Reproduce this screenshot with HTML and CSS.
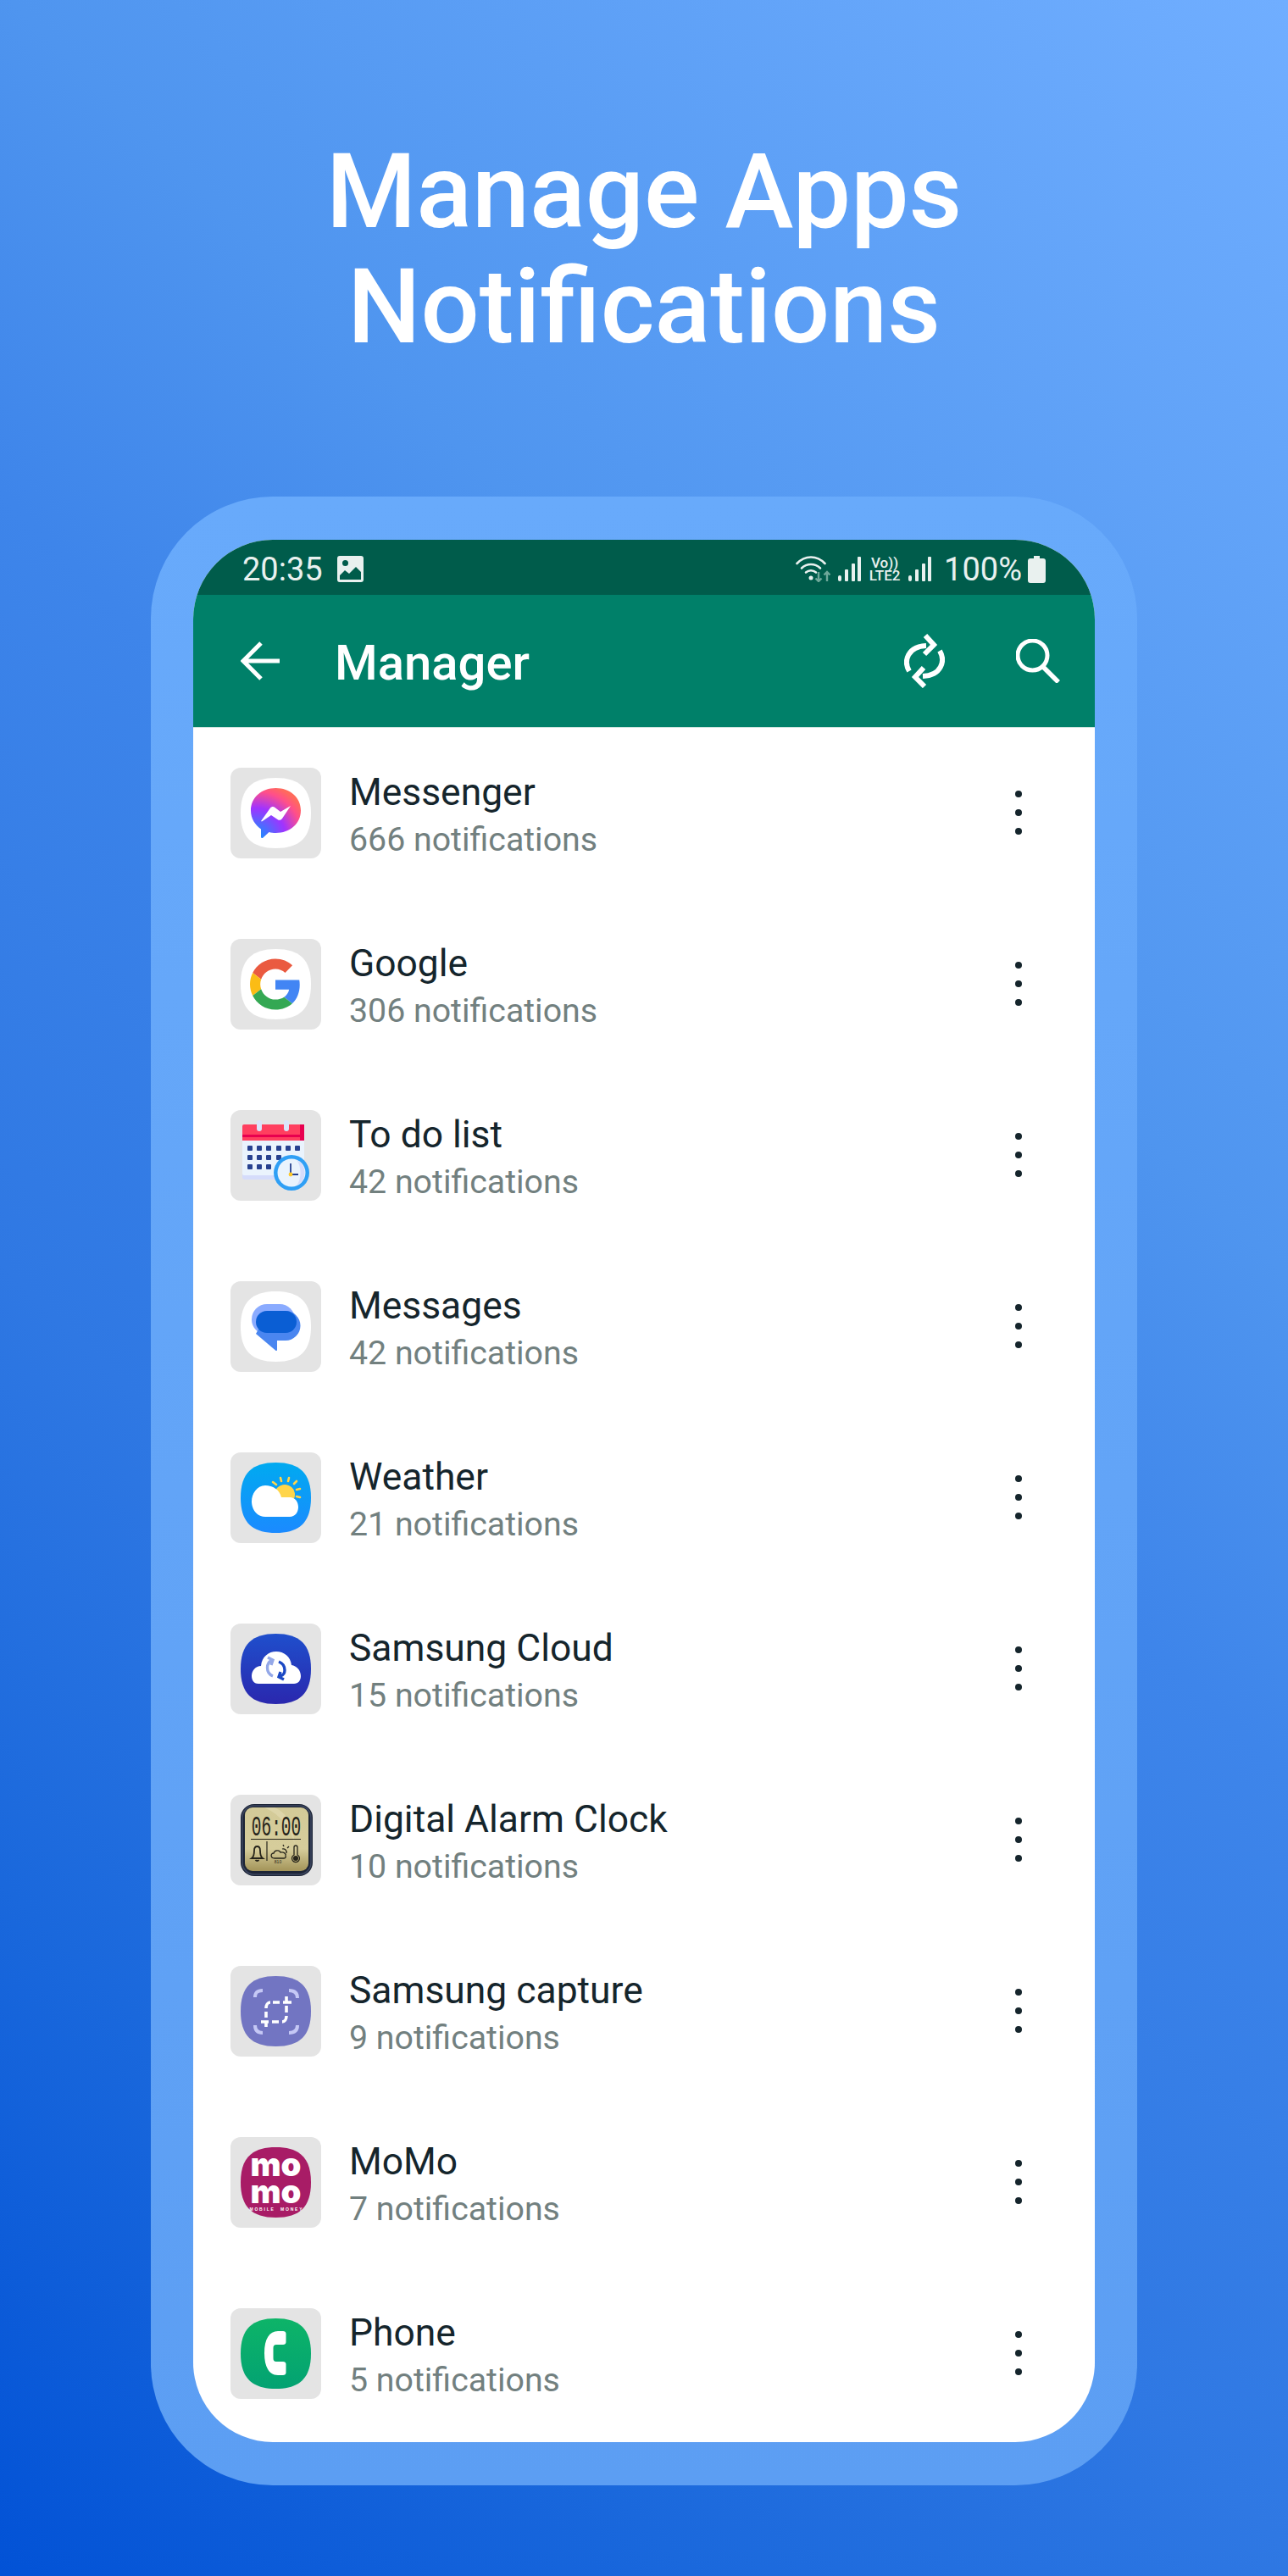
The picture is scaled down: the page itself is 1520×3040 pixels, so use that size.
FILE: index.html
```html
<!DOCTYPE html>
<html lang="en">
<head>
    <meta charset="UTF-8">
    <meta name="viewport" content="width=device-width, initial-scale=1.0">
    <title>Manage Apps Notifications</title>
    <link rel="stylesheet" href="styles.css">
</head>
<body>
    <svg class="defs" width="0" height="0">
        <defs>
            <path id="squircle" d="M53.5 12C82 12 95 25 95 53.5S82 95 53.5 95 12 82 12 53.5 25 12 53.5 12Z"/>
            <g id="kebab">
                <circle cx="6" cy="6" r="4"/>
                <circle cx="6" cy="28" r="4"/>
                <circle cx="6" cy="50" r="4"/>
            </g>
            <g id="signal">
                <rect x="0" y="22" width="4" height="7" rx="2"/>
                <rect x="8" y="15" width="4" height="14" rx="1"/>
                <rect x="16" y="8" width="4" height="21" rx="1"/>
                <rect x="23" y="0" width="4" height="29" rx="1"/>
            </g>
            <radialGradient id="msgr" cx="0.1" cy="1" r="1.1">
                <stop offset="0" stop-color="#0a99ff"/>
                <stop offset="0.55" stop-color="#a033ff"/>
                <stop offset="0.85" stop-color="#ff4f8a"/>
                <stop offset="1" stop-color="#ff6a5c"/>
            </radialGradient>
            <linearGradient id="weatherBg" x1="0" y1="0" x2="0" y2="1">
                <stop offset="0" stop-color="#00aaf0"/>
                <stop offset="1" stop-color="#1b8aff"/>
            </linearGradient>
            <linearGradient id="cloudBg" x1="0" y1="0" x2="0" y2="1">
                <stop offset="0" stop-color="#1f4fcc"/>
                <stop offset="1" stop-color="#2a27ae"/>
            </linearGradient>
            <linearGradient id="phoneBg" x1="0" y1="0" x2="0" y2="1">
                <stop offset="0" stop-color="#0db468"/>
                <stop offset="1" stop-color="#03a272"/>
            </linearGradient>
            <linearGradient id="lcd" x1="0" y1="0" x2="0" y2="1">
                <stop offset="0" stop-color="#d3ca98"/>
                <stop offset="0.65" stop-color="#d6cd9b"/>
                <stop offset="1" stop-color="#a39459"/>
            </linearGradient>
        </defs>
    </svg>

    <h1 class="headline">Manage Apps<br>Notifications</h1>

    <div class="frame">
        <div class="screen">
            <div class="statusbar">
                <span class="clock">20:35</span>
                <svg class="st-image" viewBox="0 0 31 31">
                    <path fill="#e9f1ef" fill-rule="evenodd" d="M3 0H28A3 3 0 0 1 31 3V28A3 3 0 0 1 28 31H3A3 3 0 0 1 0 28V3A3 3 0 0 1 3 0ZM9.500 5A3.500 3.500 0 1 0 9.500 12 3.500 3.500 0 0 0 9.500 5ZM3 26V28H28V19L22 13 14 21 9 17 3 23Z"/>
                </svg>
                <span class="status-right">
                    <svg class="st-wifi" viewBox="0 0 42 31">
                        <g fill="none" stroke="#e9f1ef" stroke-width="2.600" stroke-linecap="round">
                            <path d="M1.500 9C11 -1 25 -1 34.500 9"/>
                            <path d="M7 14.500C13 8.500 23 8.500 29 14.500"/>
                            <path d="M12 19.500C15.500 16.500 20.500 16.500 24 19.500"/>
                        </g>
                        <circle cx="18" cy="26" r="2.500" fill="#e9f1ef"/>
                        <g fill="none" stroke="#6fa89a" stroke-width="2.400">
                            <path d="M27 19V30M23.500 26.500 27 30 30.500 26.500"/>
                            <path d="M37 30V19M33.500 22.500 37 19 40.500 22.500"/>
                        </g>
                    </svg>
                    <svg class="st-signal" viewBox="0 0 27 29"><use href="#signal" fill="#e9f1ef"/></svg>
                    <span class="volte"><span>Vo))</span><span>LTE2</span></span>
                    <svg class="st-signal" viewBox="0 0 27 29"><use href="#signal" fill="#e9f1ef"/></svg>
                    <span class="battery-text">100%</span>
                    <svg class="st-battery" viewBox="0 0 21 32">
                        <path fill="#e9f1ef" d="M7 0H14V3H18A3 3 0 0 1 21 6V29A3 3 0 0 1 18 32H3A3 3 0 0 1 0 29V6A3 3 0 0 1 3 3H7Z"/>
                    </svg>
                </span>
            </div>

            <div class="toolbar">
                <svg class="tb-back" viewBox="0 0 46 46">
                    <path fill="none" stroke="#fff" stroke-width="5" d="M46 23H3M24 2 3 23 24 44"/>
                </svg>
                <span class="tb-title">Manager</span>
                <svg class="tb-sync" viewBox="0 0 48 64">
                    <g fill="none" stroke="#fff" stroke-width="6">
                        <path d="M6 44C-1 32 4 15 26 14"/>
                        <path d="M25 2 35 13 24 24"/>
                        <path d="M42 20C49 32 44 49 22 50"/>
                        <path d="M23 40 13 51 24 62"/>
                    </g>
                </svg>
                <svg class="tb-search" viewBox="0 0 52 52">
                    <circle cx="19.500" cy="19.500" r="17.500" fill="none" stroke="#fff" stroke-width="5"/>
                    <path fill="none" stroke="#fff" stroke-width="5.500" d="M31 32 50 51"/>
                </svg>
            </div>

            <ul class="app-list">
                <li class="app-row">
                    <svg class="app-icon" viewBox="0 0 107 107">
                        <use href="#squircle" fill="#fff"/>
                        <path fill="url(#msgr)" d="M53.500 24C70 24 83 35 83 50.500S70 77 53.500 77C50.500 77 48 76.600 45.500 76L38.500 82.500C37.300 83.500 36 83 36 81.500V72.500C29 67.500 24 60 24 50.500 24 35 37 24 53.500 24Z"/>
                        <path fill="#fff" d="M36 63 47 47.500C48.500 45.500 51 45.500 52.500 47L59 52 71 45 61 60C59.500 62 57 62.500 55.500 61L48 56 37 63.500Z"/>
                    </svg>
                    <div class="app-text">
                        <span class="app-name">Messenger</span>
                        <span class="app-count">666 notifications</span>
                    </div>
                    <svg class="app-more" viewBox="0 0 12 56"><use href="#kebab"/></svg>
                </li>
                <li class="app-row">
                    <svg class="app-icon" viewBox="0 0 107 107">
                        <use href="#squircle" fill="#fff"/>
                        <g transform="translate(23 23.500) scale(1.250)">
                            <path fill="#ea5a40" d="M24 9.500c3.540 0 6.710 1.220 9.210 3.600l6.850-6.850C35.900 2.380 30.470 0 24 0 14.620 0 6.510 5.380 2.560 13.220l7.980 6.190C12.430 13.720 17.740 9.500 24 9.500z"/>
                            <path fill="#4285f4" d="M46.980 24.550c0-1.570-.15-3.090-.38-4.550H24v9.020h12.940c-.58 2.960-2.260 5.480-4.780 7.180l7.730 6c4.510-4.180 7.090-10.360 7.090-17.650z"/>
                            <path fill="#fbbc15" d="M10.530 28.590c-.5-1.450-.78-2.990-.78-4.590s.27-3.140.78-4.590l-7.980-6.190C.92 16.460 0 20.120 0 24c0 3.880.92 7.540 2.560 10.780l7.970-6.190z"/>
                            <path fill="#34a853" d="M24 48c6.480 0 11.930-2.130 15.890-5.810l-7.730-6c-2.150 1.450-4.920 2.300-8.160 2.300-6.260 0-11.570-4.220-13.470-9.910l-7.980 6.190C6.510 42.620 14.620 48 24 48z"/>
                        </g>
                    </svg>
                    <div class="app-text">
                        <span class="app-name">Google</span>
                        <span class="app-count">306 notifications</span>
                    </div>
                    <svg class="app-more" viewBox="0 0 12 56"><use href="#kebab"/></svg>
                </li>
                <li class="app-row">
                    <svg class="app-icon" viewBox="0 0 107 107">
                        <rect x="14" y="22" width="73" height="60" rx="3" fill="#d5dcfb"/>
                        <rect x="14" y="22" width="73" height="55" rx="2" fill="#eaf3fd"/>
                        <path fill="#ff3f5f" d="M16 17H85A2 2 0 0 1 87 19V36H14V19A2 2 0 0 1 16 17Z"/>
                        <rect x="14" y="29" width="73" height="3" fill="#e8004f"/>
                        <rect x="82" y="17" width="5" height="19" fill="#e8004f"/>
                        <rect x="31" y="12" width="6" height="13" rx="3" fill="#dbe4fb"/>
                        <rect x="63" y="12" width="6" height="13" rx="3" fill="#dbe4fb"/>
                        <g fill="#27418f">
                            <rect x="20" y="42" width="6" height="6" rx="1"/><rect x="31" y="42" width="6" height="6" rx="1"/><rect x="42" y="42" width="6" height="6" rx="1"/><rect x="54" y="42" width="6" height="6" rx="1"/><rect x="65" y="42" width="6" height="6" rx="1"/><rect x="76" y="42" width="6" height="6" rx="1"/>
                            <rect x="20" y="53" width="6" height="6" rx="1"/><rect x="31" y="53" width="6" height="6" rx="1"/><rect x="42" y="53" width="6" height="6" rx="1"/><rect x="54" y="53" width="6" height="6" rx="1"/>
                            <rect x="20" y="64" width="6" height="6" rx="1"/><rect x="31" y="64" width="6" height="6" rx="1"/><rect x="42" y="64" width="6" height="6" rx="1"/>
                        </g>
                        <circle cx="72" cy="74" r="21" fill="#2f9ff5"/>
                        <circle cx="72" cy="74" r="16.500" fill="#eaf3fd"/>
                        <path fill="#d5dcfb" d="M78 59A16.500 16.500 0 0 1 78 89C84 82 84 66 78 59Z"/>
                        <path fill="none" stroke="#27418f" stroke-width="1.800" d="M71 63V76M71 76H80"/>
                        <circle cx="71" cy="76" r="2.400" fill="#ffc928"/>
                    </svg>
                    <div class="app-text">
                        <span class="app-name">To do list</span>
                        <span class="app-count">42 notifications</span>
                    </div>
                    <svg class="app-more" viewBox="0 0 12 56"><use href="#kebab"/></svg>
                </li>
                <li class="app-row">
                    <svg class="app-icon" viewBox="0 0 107 107">
                        <use href="#squircle" fill="#fff"/>
                        <rect x="25" y="27" width="51" height="36" rx="18" fill="#8aabff"/>
                        <path fill="#4a86f0" d="M48 35H65A17.500 17.500 0 0 1 65 70H55V81C55 82 54 82.500 53 81.500L30 62C38 50 36 35 48 35Z"/>
                        <rect x="30" y="35" width="48" height="26" rx="13" fill="#0a5ed4"/>
                    </svg>
                    <div class="app-text">
                        <span class="app-name">Messages</span>
                        <span class="app-count">42 notifications</span>
                    </div>
                    <svg class="app-more" viewBox="0 0 12 56"><use href="#kebab"/></svg>
                </li>
                <li class="app-row">
                    <svg class="app-icon" viewBox="0 0 107 107">
                        <use href="#squircle" fill="url(#weatherBg)"/>
                        <circle cx="64" cy="50" r="12" fill="#ffd54a"/>
                        <g stroke="#ffd54a" stroke-width="2.600" stroke-linecap="round">
                            <path d="M50 35 54 38"/><path d="M59 30 60 34"/><path d="M69 30 68 34"/><path d="M78 34 75 37"/><path d="M82 43 78 44"/><path d="M82 53 78 52"/>
                        </g>
                        <path fill="#fff" d="M41 39C50 39 58 44 60 53H70C76 53 80 58 80 64.500S76 76 70 76H41C31 76 25 67 25 58S31 39 41 39Z"/>
                    </svg>
                    <div class="app-text">
                        <span class="app-name">Weather</span>
                        <span class="app-count">21 notifications</span>
                    </div>
                    <svg class="app-more" viewBox="0 0 12 56"><use href="#kebab"/></svg>
                </li>
                <li class="app-row">
                    <svg class="app-icon" viewBox="0 0 107 107">
                        <use href="#squircle" fill="url(#cloudBg)"/>
                        <path fill="#fff" d="M33 71C27 71 25 66 25 62 25 55 30 50 36 50 37 39 45 33 54 33S71 39 72 49C78 50 83 55 83 62 83 67 80 71 75 71Z"/>
                        <g fill="none" stroke-width="3.400">
                            <path stroke="#94a8e8" d="M50 62C45 60 43.500 56 43.500 52 43.500 48 45.500 45 49 43"/>
                            <path stroke="#94a8e8" d="M44 40 50 43 48 49"/>
                            <path stroke="#1c49c4" d="M57 45C62 47 64 51 64 55 64 59 62 61 59 62"/>
                            <path stroke="#1c49c4" d="M63 66 57 63 59 57"/>
                        </g>
                    </svg>
                    <div class="app-text">
                        <span class="app-name">Samsung Cloud</span>
                        <span class="app-count">15 notifications</span>
                    </div>
                    <svg class="app-more" viewBox="0 0 12 56"><use href="#kebab"/></svg>
                </li>
                <li class="app-row">
                    <svg class="app-icon" viewBox="0 0 107 107">
                        <rect x="12" y="11" width="85" height="85" rx="16" fill="#1d2536"/>
                        <rect x="14" y="13" width="81" height="81" rx="14" fill="none" stroke="#3c4660" stroke-width="1.500"/>
                        <rect x="17" y="15" width="75" height="75" rx="9" fill="url(#lcd)"/>
                        <path fill="#e6dfb8" opacity="0.55" d="M40 15H52C68 22 74 38 76 60 72 40 60 24 40 15Z"/>
                        <text class="lcd-time" transform="translate(54 48) scale(1 1.700)" text-anchor="middle">06:00</text>
                        <path stroke="#26241a" stroke-width="1.200" d="M24 52.500H83M43 55V78"/>
                        <path fill="none" stroke="#26241a" stroke-width="1.800" d="M25 75C28 73 28 69 28 66 28 63 29.500 61 31.500 61S35 63 35 66C35 69 35 73 38 75ZM29.500 77A2.500 2.500 0 0 0 33.500 77"/>
                        <path fill="none" stroke="#26241a" stroke-width="1.300" d="M52 75C47 75 47 69 51 69 52 65 58 65 59 68 63 67 66 70 65 72 66 74 64 75 63 75ZM61 64A4 4 0 0 1 66 69M62 59 63 61M69 61 67 63"/>
                        <text class="lcd-small" x="56" y="81" text-anchor="middle">810</text>
                        <path fill="none" stroke="#26241a" stroke-width="1.300" d="M75 62A2 2 0 0 1 79 62V71A4.500 4.500 0 1 1 75 71Z"/>
                        <circle cx="77" cy="75" r="3" fill="#26241a"/>
                    </svg>
                    <div class="app-text">
                        <span class="app-name">Digital Alarm Clock</span>
                        <span class="app-count">10 notifications</span>
                    </div>
                    <svg class="app-more" viewBox="0 0 12 56"><use href="#kebab"/></svg>
                </li>
                <li class="app-row">
                    <svg class="app-icon" viewBox="0 0 107 107">
                        <use href="#squircle" fill="#7275c2"/>
                        <g fill="none" stroke="#c5c8f5" stroke-width="4">
                            <path d="M29 37C29 32 31 29 38 29"/>
                            <path d="M69 29C76 29 79 32 79 38"/>
                            <path d="M29 70C29 76 32 79 38 79"/>
                            <path d="M69 79C76 79 79 76 79 70"/>
                        </g>
                        <path fill="none" stroke="#fff" stroke-width="3.600" d="M66 36V43M62 43H72M50 43H58M42 50C42 46 44 43 47 43M42 54V61M66 47V55M66 59C66 63 64 66 61 66M49 66H57M36 66H45M42 66V72"/>
                    </svg>
                    <div class="app-text">
                        <span class="app-name">Samsung capture</span>
                        <span class="app-count">9 notifications</span>
                    </div>
                    <svg class="app-more" viewBox="0 0 12 56"><use href="#kebab"/></svg>
                </li>
                <li class="app-row">
                    <svg class="app-icon" viewBox="0 0 107 107">
                        <use href="#squircle" fill="#a81c66"/>
                        <text class="momo-big" x="53.500" y="46" text-anchor="middle" textLength="60" lengthAdjust="spacingAndGlyphs">mo</text>
                        <text class="momo-big" x="53.500" y="78" text-anchor="middle" textLength="60" lengthAdjust="spacingAndGlyphs">mo</text>
                        <text class="momo-small" x="53.500" y="87" text-anchor="middle" textLength="62">MOBILE  MONEY</text>
                    </svg>
                    <div class="app-text">
                        <span class="app-name">MoMo</span>
                        <span class="app-count">7 notifications</span>
                    </div>
                    <svg class="app-more" viewBox="0 0 12 56"><use href="#kebab"/></svg>
                </li>
                <li class="app-row">
                    <svg class="app-icon" viewBox="0 0 107 107">
                        <use href="#squircle" fill="url(#phoneBg)"/>
                        <path fill="#fff" d="M62 27C64 27 65.500 28 65.500 30V40C65.500 42 64 43 62 43H54C51.500 43 50.500 44.500 50.500 47V59C50.500 61.500 51.500 63 54 63H62C64 63 65.500 64 65.500 66V76C65.500 78 64 79 62 79H56C46 79 40 70 40 53S46 27 56 27Z"/>
                    </svg>
                    <div class="app-text">
                        <span class="app-name">Phone</span>
                        <span class="app-count">5 notifications</span>
                    </div>
                    <svg class="app-more" viewBox="0 0 12 56"><use href="#kebab"/></svg>
                </li>
            </ul>
        </div>
    </div>
</body>
</html>
```

FILE: styles.css
```css
* {
    margin: 0;
    padding: 0;
    box-sizing: border-box;
}

body {
    width: 1520px;
    height: 3040px;
    overflow: hidden;
    font-family: Roboto, "Liberation Sans", sans-serif;
    background: linear-gradient(225deg, #70aeff 0%, #4f95ef 33%, #3e85ea 46%, #2f78e3 66%, #1a68dc 82%, #0252d6 100%);
}

.defs {
    display: block;
    height: 0;
}

.headline {
    margin: 159px 0 155px;
    color: #fff;
    font-size: 122px;
    font-weight: 500;
    line-height: 136px;
    text-align: center;
}

/* Phone frame */
.frame {
    width: 1164px;
    height: 2347px;
    margin: 0 auto;
    padding: 51px 50px;
    border-radius: 144px;
    background: linear-gradient(#68aafb, #5c9ef3);
}

.screen {
    height: 100%;
    overflow: hidden;
    border-radius: 94px;
    background: #fff;
}

/* Status bar */
.statusbar {
    display: flex;
    align-items: center;
    height: 65px;
    padding: 4px 58px 0 58px;
    color: #e9f1ef;
    background: #005c4b;
}

.clock {
    font-size: 38px;
    line-height: 1;
}

.st-image {
    width: 31px;
    height: 31px;
    margin-left: 17px;
}

.status-right {
    display: flex;
    align-items: center;
    margin-left: auto;
}

.st-wifi {
    width: 42px;
    height: 31px;
    margin-right: 8px;
}

.st-signal {
    width: 27px;
    height: 29px;
}

.volte {
    display: flex;
    flex-direction: column;
    align-items: center;
    width: 40px;
    margin: 0 8px;
    font-size: 17px;
    font-weight: 500;
    line-height: 15px;
}

.battery-text {
    margin: 0 7px 0 15px;
    font-size: 38px;
    line-height: 1;
}

.st-battery {
    width: 21px;
    height: 32px;
}

/* Toolbar */
.toolbar {
    display: flex;
    align-items: center;
    height: 157px;
    padding: 0 41px 0 56px;
    background: #008069;
    border-bottom: 1px solid #cfe5df;
}

.tb-back {
    width: 46px;
    height: 46px;
}

.tb-title {
    margin-left: 65px;
    padding-top: 3px;
    color: #fff;
    font-size: 58px;
    font-weight: 500;
}

.tb-sync {
    width: 48px;
    height: 64px;
    margin-left: auto;
}

.tb-search {
    width: 52px;
    height: 52px;
    margin-left: 84px;
}

/* App list */
.app-list {
    margin-top: -1px;
    list-style: none;
}

.app-row {
    display: flex;
    align-items: center;
    height: 202px;
    padding-left: 44px;
}

.app-icon {
    flex: none;
    width: 107px;
    height: 107px;
    border-radius: 12px;
    background: #e4e4e4;
}

.app-text {
    display: flex;
    flex-direction: column;
    padding-top: 8px;
    margin-left: 33px;
}

.app-name {
    color: #15252c;
    font-size: 44.4px;
    line-height: 56px;
}

.app-count {
    color: #72807f;
    font-size: 39.3px;
    line-height: 57px;
}

.app-more {
    width: 12px;
    height: 56px;
    margin-left: auto;
    margin-right: 84px;
    fill: #15252c;
}

/* Text inside the app icons */
.lcd-time {
    font-family: "Liberation Mono", monospace;
    font-size: 19.5px;
    fill: #26241a;
}

.lcd-small {
    font-family: "Liberation Sans", sans-serif;
    font-size: 5px;
    fill: #26241a;
}

.momo-big {
    font-family: Inter, sans-serif;
    font-size: 39px;
    font-weight: 900;
    fill: #fff;
}

.momo-small {
    font-family: "Liberation Sans", sans-serif;
    font-size: 5px;
    font-weight: 700;
    fill: #fff;
    white-space: pre;
}
```
